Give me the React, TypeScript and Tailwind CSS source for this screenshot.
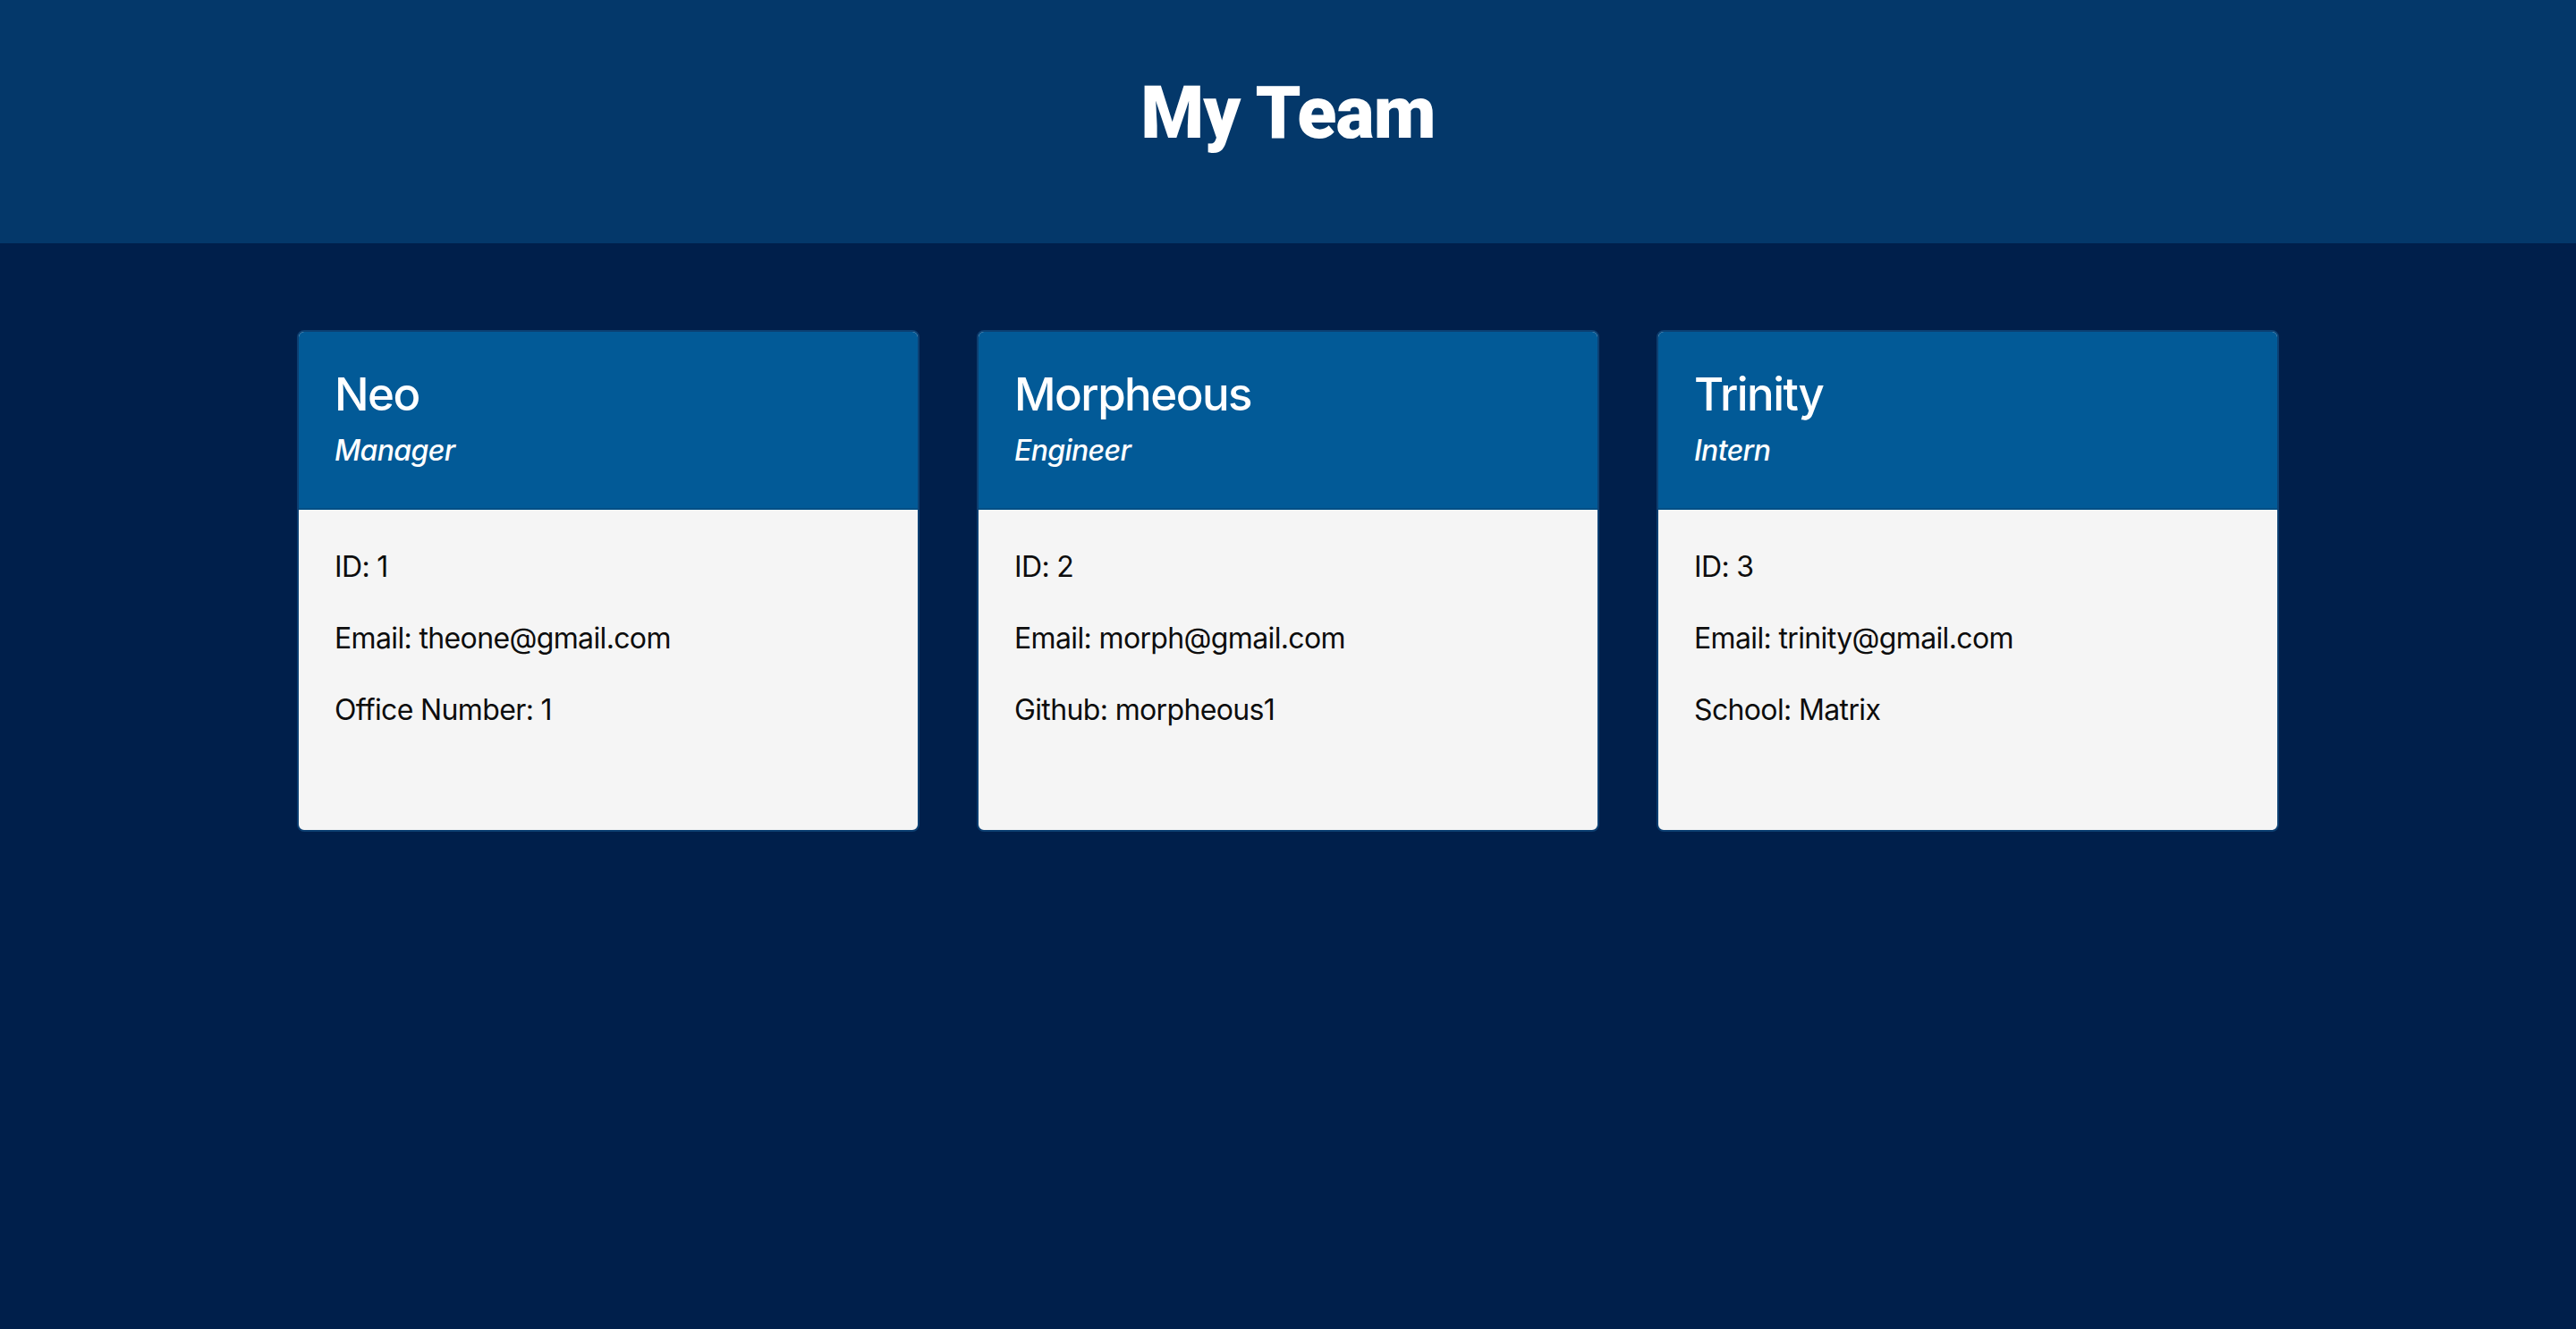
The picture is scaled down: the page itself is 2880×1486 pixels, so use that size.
const team = [
  {
    name: "Neo",
    role: "Manager",
    id: 1,
    email: "theone@gmail.com",
    extra: "Office Number: 1",
  },
  {
    name: "Morpheous",
    role: "Engineer",
    id: 2,
    email: "morph@gmail.com",
    extra: "Github: morpheous1",
  },
  {
    name: "Trinity",
    role: "Intern",
    id: 3,
    email: "trinity@gmail.com",
    extra: "School: Matrix",
  },
];

const Card = ({ member }: { member: (typeof team)[number] }) => {
  return (
    <div className="w-[696px] rounded-[8px] border-2 border-[#0c3f72] overflow-hidden bg-[#f5f5f5]">
      <div className="bg-[#025a97] border-b-2 border-[#024f86] px-[40px] pt-[40px] pb-[40px] text-white">
        <h2 className="text-[51px] leading-[60px] font-medium tracking-[-0.03em]">
          {member.name}
        </h2>
        <h3 className="text-[32px] leading-[48px] font-medium italic mt-[9px] tracking-[-0.02em]">
          {member.role}
        </h3>
      </div>
      <div className="h-[358px] px-[40px] pt-[40px] text-[32px] leading-[48px] text-[#0d0d0d] tracking-[-0.02em]">
        <p className="mb-[32px]">ID: {member.id}</p>
        <p className="mb-[32px]">Email: {member.email}</p>
        <p className="mb-[32px]">{member.extra}</p>
      </div>
    </div>
  );
};

export default function App() {
  return (
    <div
      className="min-h-screen bg-[#001f4b]"
      style={{ fontFamily: "Inter, 'Noto Sans', sans-serif" }}
    >
      <header className="h-[272px] bg-[#04386a] pt-[86px]">
        <h1
          className="text-center text-white text-[81px] leading-none font-black tracking-[-0.01em]"
          style={{ fontFamily: "Roboto, sans-serif" }}
        >
          My Team
        </h1>
      </header>
      <main className="pt-[97px] flex justify-center gap-[64px]">
        {team.map((m) => (
          <Card key={m.id} member={m} />
        ))}
      </main>
    </div>
  );
}
